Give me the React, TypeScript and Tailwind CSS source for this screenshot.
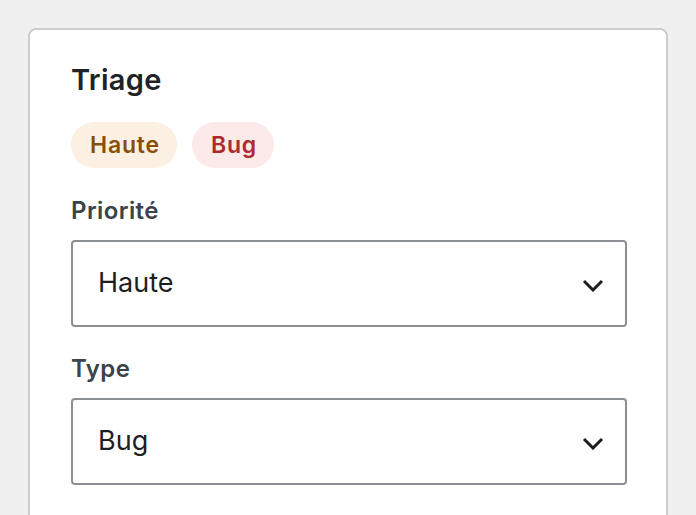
import { useState } from "react";

const Chevron = () => (
  <svg width="22" height="13" viewBox="0 0 22 13" fill="none" className="shrink-0 mt-[4px]">
    <path d="M2 2l9 9 9-9" stroke="#1e1e1e" strokeWidth="3" strokeLinecap="butt" strokeLinejoin="miter" />
  </svg>
);

const Field = ({ label, value }: { label: string; value: string }) => (
  <div className="flex flex-col">
    <div className="text-[24px] leading-[30px] font-semibold tracking-[0.4px] text-[#3c434a]">{label}</div>
    <div className="mt-[14px] h-[87px] flex items-center justify-between border-2 border-[#8c8f94] rounded-[4px] pl-[25px] pr-[21px]">
      <span className="text-[27px] text-[#1e1e1e]">{value}</span>
      <Chevron />
    </div>
  </div>
);

const App = () => {
  const [tags] = useState([
    { name: "Haute", cls: "bg-[#fcf0e3] text-[#8a4d0c]" },
    { name: "Bug", cls: "bg-[#fce9e9] text-[#ad2a30]" },
  ]);

  return (
    <div
      className="min-h-screen bg-[#f0f0f0] pl-[28px] pt-[28px]"
      style={{ fontFamily: "Inter, 'Noto Sans', sans-serif" }}
    >
      <div className="w-[640px] min-h-[520px] bg-white border-2 border-[#cccccc] rounded-[8px] pl-[41px] pr-[39px] pt-[33px]">
        <h2 className="text-[29px] leading-[34px] font-semibold tracking-[0.3px] text-[#1d2327]">Triage</h2>

        <div className="flex gap-[15px] mt-[25px]">
          {tags.map((t) => (
            <span
              key={t.name}
              className={`h-[46px] flex items-center pl-[19px] pr-[17px] rounded-full text-[23px] font-semibold tracking-[0.8px] ${t.cls}`}
            >
              {t.name}
            </span>
          ))}
        </div>

        <div className="flex flex-col gap-[27px] mt-[28px]">
          <Field label="Priorité" value="Haute" />
          <Field label="Type" value="Bug" />
        </div>
      </div>
    </div>
  );
};

export default App;
